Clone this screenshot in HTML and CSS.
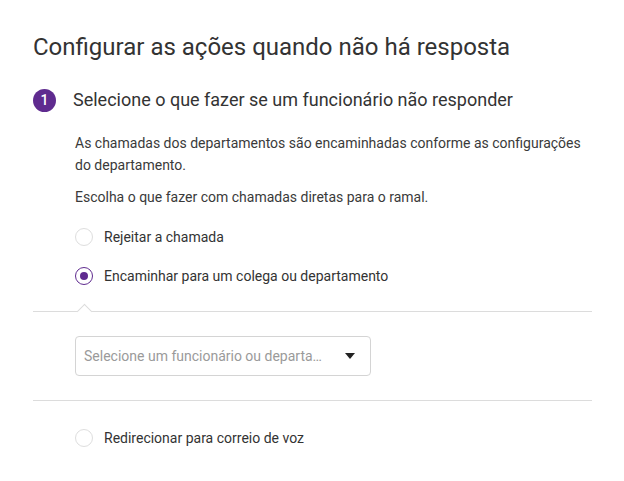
FILE: index.html
```html
<!DOCTYPE html>
<html lang="pt">
<head>
<meta charset="utf-8">
<link rel="stylesheet" href="styles.css">
</head>
<body>
<div class="page">
  <h1 class="title">Configurar as ações quando não há resposta</h1>
  <div class="step-head">
    <span class="badge">1</span>
    <h2 class="step-title">Selecione o que fazer se um funcionário não responder</h2>
  </div>
  <div class="step-body">
    <p class="text">As chamadas dos departamentos são encaminhadas conforme as configurações do departamento.</p>
    <p class="text">Escolha o que fazer com chamadas diretas para o ramal.</p>
    <label class="radio-row"><span class="radio"></span><span class="label">Rejeitar a chamada</span></label>
    <label class="radio-row"><span class="radio checked"></span><span class="label">Encaminhar para um colega ou departamento</span></label>
  </div>
  <div class="panel">
    <span class="notch"></span>
    <div class="select">
      <span class="placeholder">Selecione um funcionário ou departa…</span>
      <svg class="caret" width="10" height="6" viewBox="0 0 10 6"><path d="M0 0H10L5 6Z" fill="#222"/></svg>
    </div>
  </div>
  <div class="step-body">
    <label class="radio-row last"><span class="radio"></span><span class="label">Redirecionar para correio de voz</span></label>
  </div>
</div>
</body>
</html>
```

FILE: styles.css
```css
* { box-sizing: border-box; }
html, body { margin: 0; padding: 0; background: #fff; }
body { font-family: Roboto, "Noto Sans", sans-serif; color: #333; }
.page { padding: 31px 32px 20px 33px; }
.title { margin: 0; font-size: 24px; font-weight: 400; line-height: 32px; color: #333; }
.step-head { display: flex; align-items: center; gap: 17px; margin-top: 25px; }
.badge { width: 23px; height: 23px; border-radius: 50%; background: #5f2b8f; color: #fff; font-size: 14px; font-weight: 500; display: flex; align-items: center; justify-content: center; flex: none; }
.step-title { margin: 0; font-size: 18px; font-weight: 400; line-height: 24px; color: #333; }
.step-body { padding-left: 42px; }
.text { margin: 20px 0 0; font-size: 14px; line-height: 22px; color: #3a3a3a; }
.text + .text { margin-top: 10px; }
.radio-row { display: flex; align-items: center; gap: 11px; height: 22px; margin-top: 18px; }
.radio-row + .radio-row { margin-top: 17px; }
.radio { width: 18px; height: 18px; border-radius: 50%; border: 1px solid #dedede; flex: none; display: flex; align-items: center; justify-content: center; }
.radio.checked { border: 1.5px solid #5f2b8f; }
.radio.checked::after { content: ""; width: 8px; height: 8px; border-radius: 50%; background: #5f2b8f; }
.label { font-size: 14px; line-height: 20px; color: #333; }
.panel { position: relative; margin-top: 24px; border-top: 1px solid #dcdcdc; border-bottom: 1px solid #dcdcdc; padding: 24px 0 24px 42px; }
.notch { position: absolute; top: -6px; left: 46px; width: 11px; height: 11px; background: #fff; border-top: 1px solid #dcdcdc; border-left: 1px solid #dcdcdc; transform: rotate(45deg); }
.select { width: 296px; height: 40px; border: 1px solid #d4d4d4; border-radius: 4px; display: flex; align-items: center; justify-content: space-between; padding: 0 15px 0 8px; }
.placeholder { font-size: 14px; color: #9a9a9a; }
.caret { flex: none; }
.radio-row.last { margin-top: 26px; }
```
